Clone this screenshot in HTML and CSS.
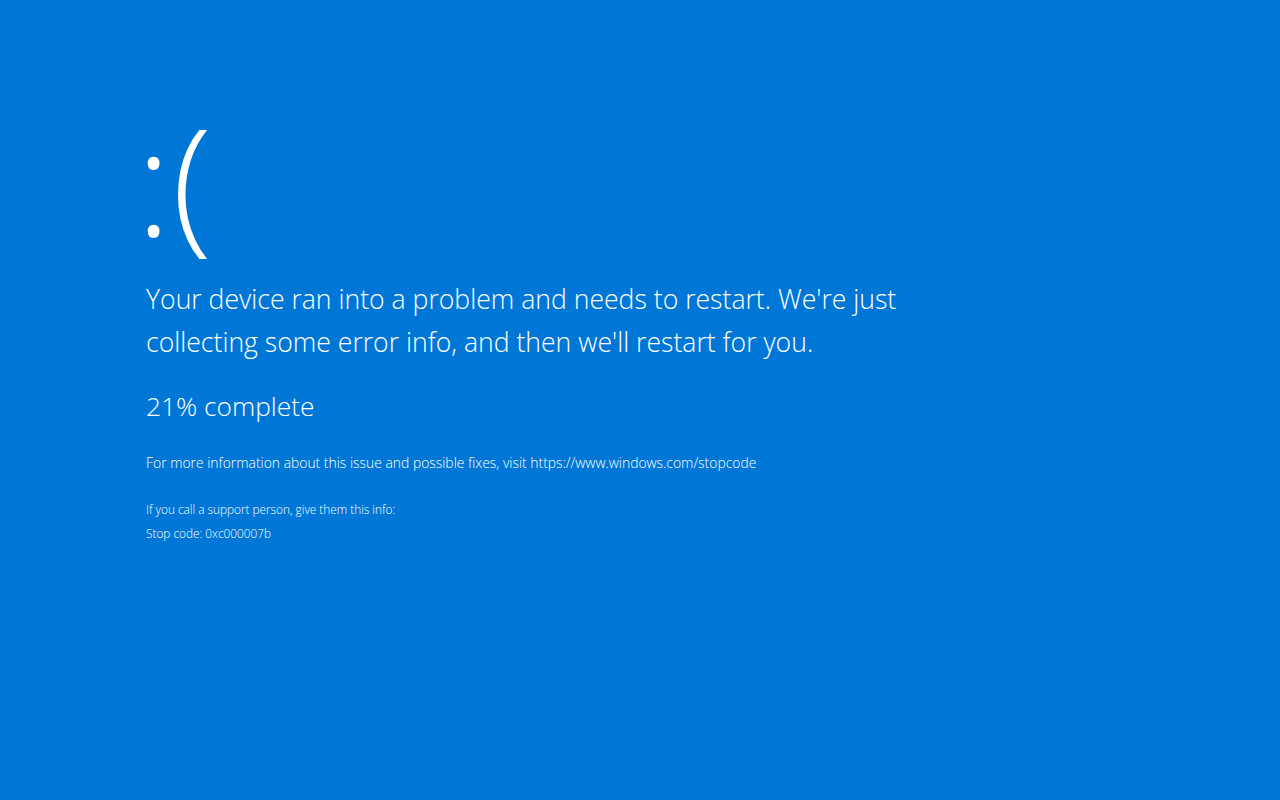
FILE: index.html
```html
<!DOCTYPE html>
<html lang="en">
<head>
<meta charset="utf-8">
<title>Blue screen</title>
<link rel="stylesheet" href="styles.css">
</head>
<body>
<main class="screen">
  <div class="face">:(</div>
  <p class="message">Your device ran into a problem and needs to restart. We're just<br>collecting some error info, and then we'll restart for you.</p>
  <p class="progress">21% complete</p>
  <p class="info">For more information about this issue and possible fixes, visit https://www.windows.com/stopcode</p>
  <div class="support">
    <p class="small">If you call a support person, give them this info:</p>
    <p class="small">Stop code: 0xc000007b</p>
  </div>
</main>
</body>
</html>
```
FILE: styles.css
```css
html, body {
  margin: 0;
  padding: 0;
  height: 100%;
}
body {
  background: #0077d7;
  color: #ffffff;
  font-family: "Open Sans", "Noto Sans", sans-serif;
  font-weight: 300;
}
.screen {
  display: flex;
  flex-direction: column;
  align-items: flex-start;
  padding: 84px 0 0 146px;
}
.face {
  margin-left: -10px;
  margin-bottom: 4px;
  font-size: 147px;
  line-height: 190px;
  font-weight: 300;
  letter-spacing: 1px;
}
.message {
  margin: 0;
  font-size: 26.6px;
  line-height: 43px;
}
.progress {
  margin: 22px 0 0;
  font-size: 26.3px;
  line-height: 40px;
}
.info {
  margin: 27px 0 0;
  font-size: 13.9px;
  line-height: 20px;
}
.support {
  margin-top: 26px;
  display: flex;
  flex-direction: column;
  gap: 4px;
}
.small {
  margin: 0;
  font-size: 11.8px;
  line-height: 20px;
}
```
